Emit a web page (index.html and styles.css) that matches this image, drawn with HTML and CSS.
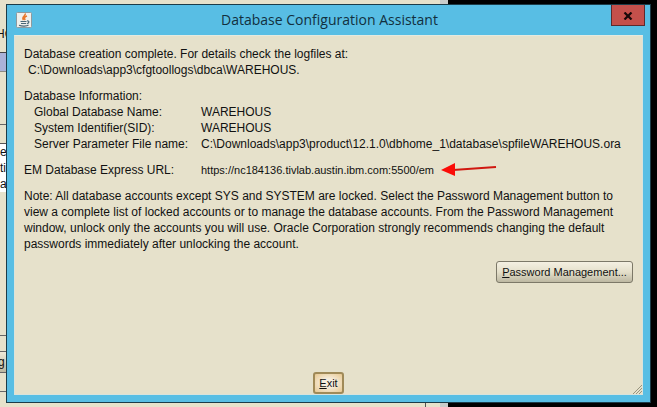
FILE: index.html
```html
<!DOCTYPE html>
<html lang="en">
<head>
  <meta charset="UTF-8">
  <meta name="viewport" content="width=device-width, initial-scale=1">
  <title>Database Configuration Assistant</title>
  <link rel="stylesheet" href="styles.css">
</head>
<body>
  <!-- Window behind the dialog -->
  <div class="back-window">
    <div class="back-edge"></div>
    <span class="back-ho">HO</span>
    <div class="back-selected"></div>
    <div class="back-line"></div>
    <div class="back-list">
      <span>e</span>
      <span>ti</span>
      <span>a</span>
    </div>
    <div class="back-group"></div>
    <div class="back-button">g</div>
    <div class="back-tick"></div>
  </div>

  <!-- Dialog -->
  <div class="dialog">
    <div class="title-bar">
      <svg class="java-icon" viewBox="0 0 16 16">
        <rect x="0.5" y="0.5" width="15" height="15" rx="1" fill="#f0f0ec" stroke="#8e9a9e"/>
        <path d="M9 1.500 C10.500 4 5 4.500 7.500 8 M11 4 C8 5 8 6.500 9.200 8" fill="none" stroke="#e8782c" stroke-width="1.600"/>
        <path d="M4.500 9.500 H10.500 M5 11.500 H10 M11 9 C14 8.500 13 11.500 10.800 11.500 M3 13.200 C6 14.500 11 14.200 12.500 13" fill="none" stroke="#4a6676" stroke-width="1.200"/>
      </svg>
      <h1>Database Configuration Assistant</h1>
      <button class="close" aria-label="Close">
        <svg viewBox="0 0 10 8"><path d="M1.500 0.500 L8.500 7.500 M8.500 0.500 L1.500 7.500" stroke="#180808" stroke-width="2.200"/></svg>
      </button>
    </div>

    <div class="content">
      <p>Database creation complete. For details check the logfiles at:</p>
      <p class="path">C:\Downloads\app3\cfgtoollogs\dbca\WAREHOUS.</p>

      <dl class="info">
        <dt class="heading">Database Information:</dt>
        <dt>Global Database Name:</dt>
        <dd>WAREHOUS</dd>
        <dt>System Identifier(SID):</dt>
        <dd>WAREHOUS</dd>
        <dt>Server Parameter File name:</dt>
        <dd>C:\Downloads\app3\product\12.1.0\dbhome_1\database\spfileWAREHOUS.ora</dd>
      </dl>

      <div class="url-row">
        <span class="url-label">EM Database Express URL:</span>
        <span class="url">https://nc184136.tivlab.austin.ibm.com:5500/em</span>
        <svg class="arrow" viewBox="0 0 56 14">
          <path d="M12 7 L55 4" stroke="#d01810" stroke-width="2"/>
          <path d="M0 7 L14 0 L14 13 Z" fill="#fb0d08"/>
        </svg>
      </div>

      <p class="note">Note: All database accounts except SYS and SYSTEM are locked. Select the Password Management button to<br>
      view a complete list of locked accounts or to manage the database accounts. From the Password Management<br>
      window, unlock only the accounts you will use. Oracle Corporation strongly recommends changing the default<br>
      passwords immediately after unlocking the account.</p>

      <button class="btn password"><u>P</u>assword Management...</button>
      <button class="btn exit"><u>E</u>xit</button>

      <svg class="grip" viewBox="0 0 9 9">
        <path d="M0 9 L9 0 M3 9 L9 3 M6 9 L9 6" stroke="#98947f"/>
      </svg>
    </div>
  </div>
</body>
</html>
```

FILE: styles.css
```css
/* General Reset */
* {
  margin: 0;
  padding: 0;
  box-sizing: border-box;
}

body {
  height: 100vh;
  padding: 4px 6px;
  background-color: #000;
  color: #111;
  font-family: "Liberation Sans", Arial, sans-serif;
  font-size: 12px;
  line-height: 16px;
  overflow: hidden;
}

/* Window behind the dialog */
.back-window {
  position: absolute;
  top: 0;
  left: 0;
  width: 448px;
  height: 100%;
  background-color: #e6e2cb;
  overflow: hidden;
}

.back-edge {
  position: absolute;
  right: 0;
  width: 8px;
  height: 100%;
  background-color: #c9cdcb;
}

.back-ho {
  position: absolute;
  top: 26px;
  left: -4px;
}

.back-selected {
  position: absolute;
  top: 52px;
  width: 8px;
  height: 20px;
  background-color: #aab2d8;
  border-top: 1px solid #444;
  border-bottom: 1px solid #8c8c84;
}

.back-line {
  position: absolute;
  top: 124px;
  width: 8px;
  height: 1px;
  background-color: #666;
}

.back-list {
  position: absolute;
  top: 143px;
  width: 8px;
  height: 49px;
  background-color: #fff;
  border-top: 1px solid #555;
}

.back-list span {
  display: block;
}

.back-group {
  position: absolute;
  top: 335px;
  width: 8px;
  height: 57px;
  border-top: 1px solid #666;
  border-bottom: 1px solid #666;
}

.back-button {
  position: absolute;
  top: 351px;
  left: -4px;
  width: 14px;
  height: 22px;
  padding: 2px 0 0 1px;
  background: linear-gradient(#eeead8, #bbb7a0);
  border: 1px solid #666;
}

.back-tick {
  position: absolute;
  bottom: 0;
  left: 425px;
  width: 1px;
  height: 5px;
  background-color: #555;
}

/* Dialog */
.dialog {
  position: relative;
  display: flex;
  flex-direction: column;
  height: 100%;
  padding: 0 7px 7px;
  background-color: #58bee4;
  border: 1px solid #1c3c48;
}

.title-bar {
  display: flex;
  align-items: center;
  height: 30px;
  flex-shrink: 0;
}

.java-icon {
  width: 16px;
  height: 16px;
  margin-left: 2px;
}

.title-bar h1 {
  flex: 1;
  padding-left: 16px;
  color: #12303e;
  font-family: "Open Sans", "Segoe UI", sans-serif;
  font-size: 14px;
  font-weight: normal;
  text-align: center;
}

.close {
  align-self: flex-start;
  width: 34px;
  height: 21px;
  margin-right: -2px;
  background-color: #c4504b;
  border: 1px solid #5e2a2c;
  border-top: none;
}

.close svg {
  width: 10px;
  height: 8px;
}

/* Dialog content */
.content {
  position: relative;
  flex: 1;
  display: flex;
  flex-direction: column;
  padding: 10px 9px 0;
  background-color: #e6e1cb;
  border: 1px solid #d9e3dc;
  border-top-color: #e4eae0;
  white-space: nowrap;
}

.path {
  padding-left: 4px;
}

.info {
  display: grid;
  grid-template-columns: 177px 1fr;
  margin-top: 10px;
}

.info dt {
  padding-left: 10px;
}

.info .heading {
  grid-column: 1 / 3;
  padding-left: 0;
}

.url-row {
  display: flex;
  align-items: center;
  margin-top: 10px;
}

.url-label {
  width: 177px;
}

.url {
  font-size: 11px;
}

.arrow {
  width: 56px;
  height: 14px;
  margin-left: 7px;
}

.note {
  margin-top: 10px;
}

/* Buttons */
.btn {
  height: 22px;
  color: #111;
  font-family: inherit;
  font-size: 11px;
  background: linear-gradient(#f4f0e2, #e4dfca 50%, #bdb8a2);
  border: 1px solid #7c7868;
  border-radius: 3px;
}

.password {
  align-self: flex-end;
  width: 137px;
  margin-top: 9px;
}

.exit {
  align-self: center;
  width: 31px;
  margin-top: auto;
  background: radial-gradient(#f6eee0 30%, #e8c890 100%);
  border: 2px solid #a08a58;
}

.grip {
  position: absolute;
  right: 0;
  bottom: 0;
  width: 9px;
  height: 9px;
}
```
